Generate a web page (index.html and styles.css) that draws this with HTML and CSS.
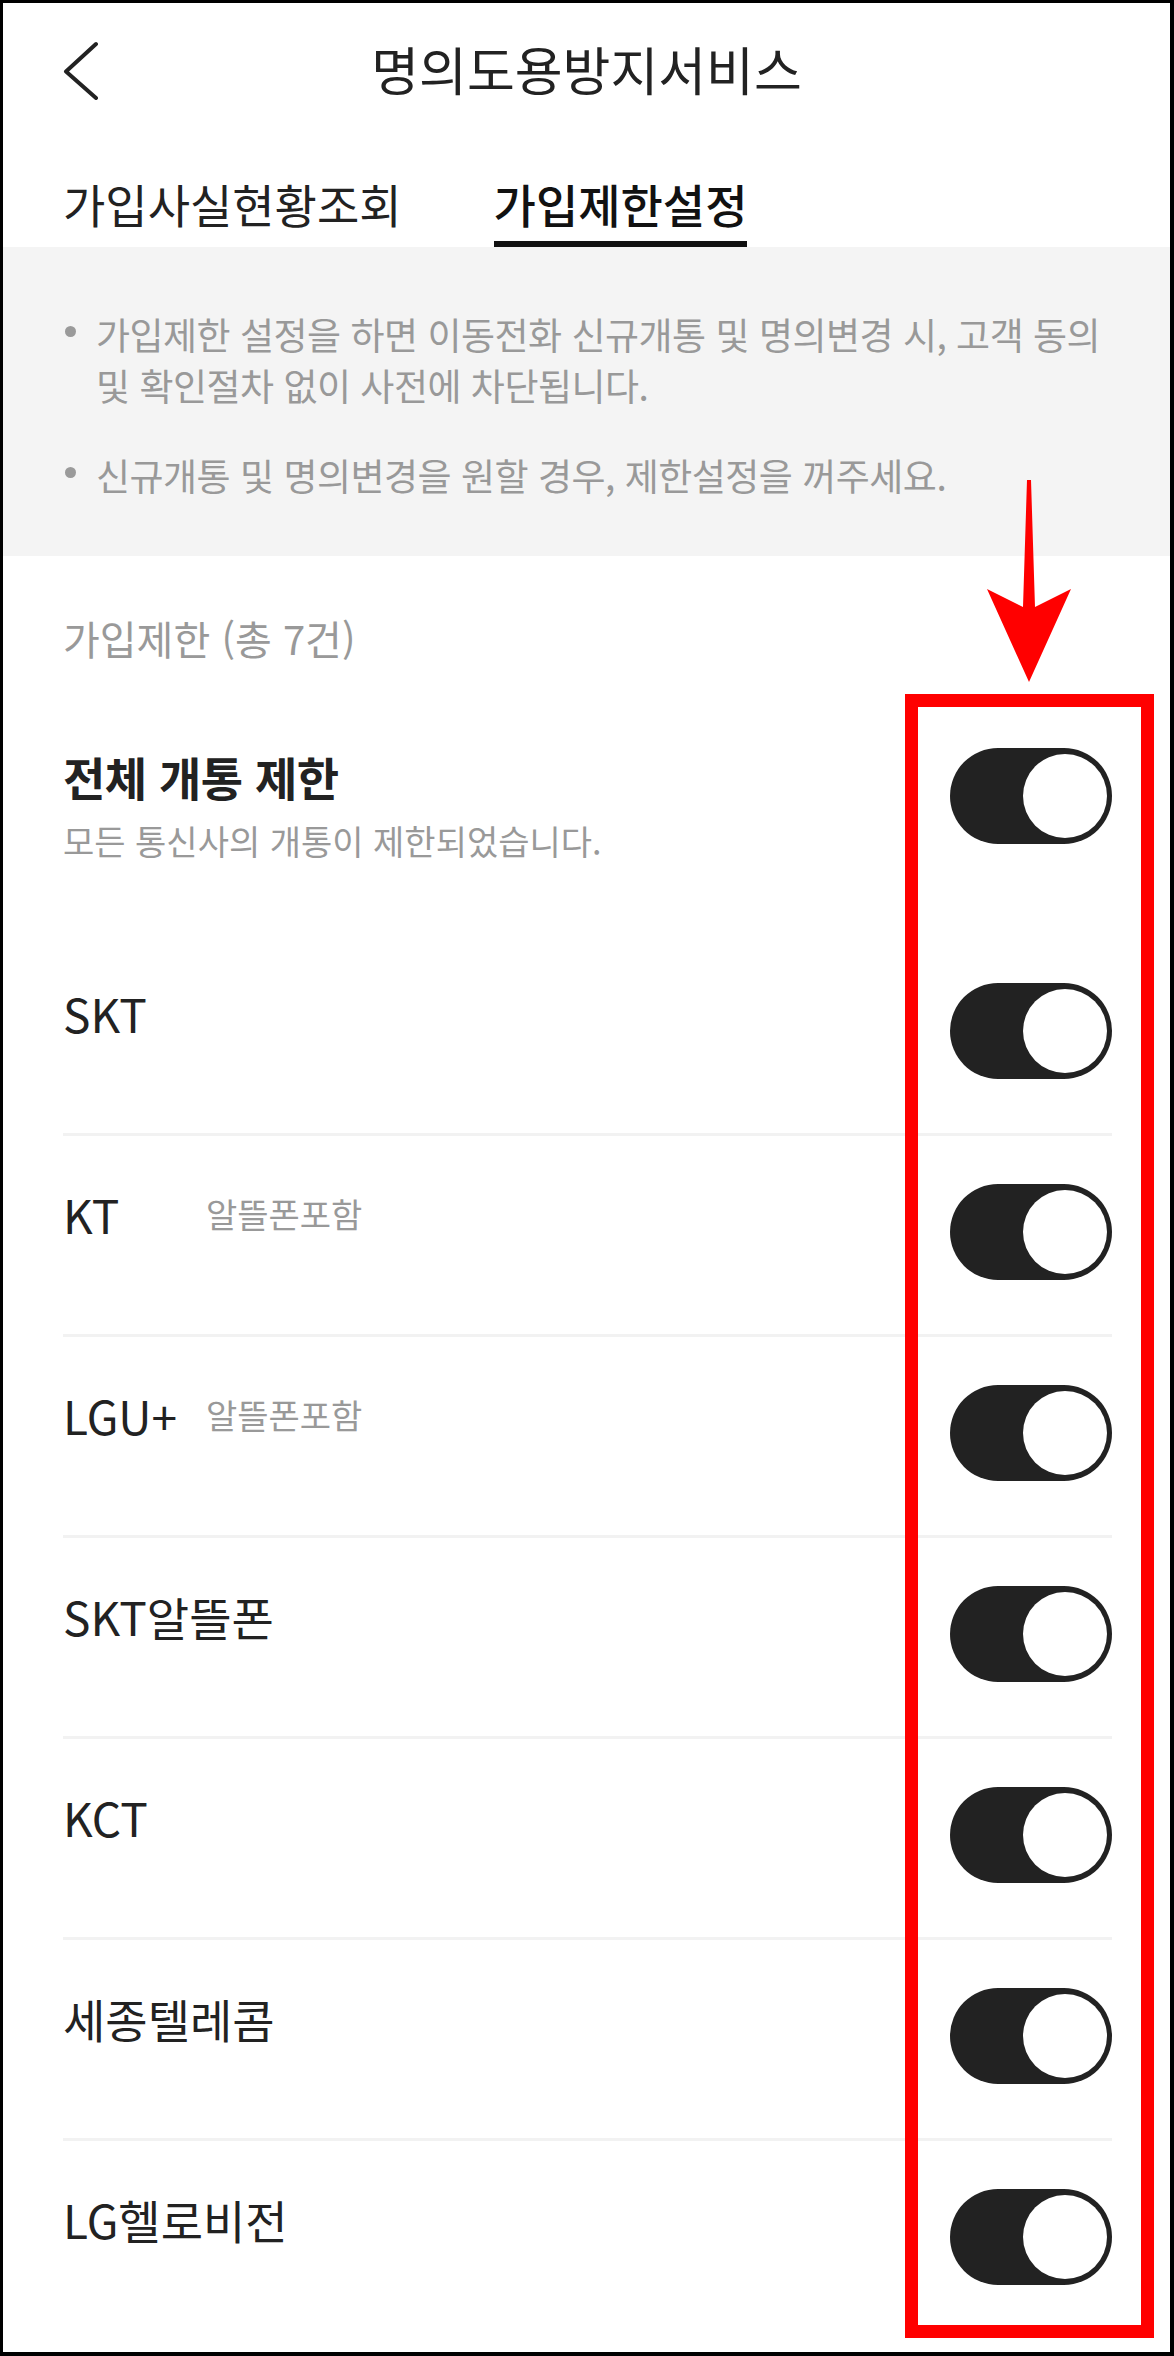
FILE: index.html
```html
<!DOCTYPE html>
<html lang="ko">
<head>
<meta charset="utf-8">
<title>명의도용방지서비스</title>
<link rel="stylesheet" href="styles.css">
</head>
<body>
<div class="screen">
  <header class="appbar">
    <button class="back" type="button" aria-label="뒤로">
      <svg class="back-icon" width="40" height="62" viewBox="0 0 40 62">
        <polyline points="33,6 3,33.5 33,60" fill="none" stroke="#222" stroke-width="4" stroke-linecap="round" stroke-linejoin="round"/>
      </svg>
    </button>
    <h1 class="title">명의도용방지서비스</h1>
    <span class="appbar-spacer"></span>
  </header>

  <nav class="tabs">
    <a class="tab" href="#">가입사실현황조회</a>
    <a class="tab tab--active" href="#">가입제한설정</a>
  </nav>

  <section class="notice">
    <ul class="notice-list">
      <li>가입제한 설정을 하면 이동전화 신규개통 및 명의변경 시, 고객 동의 및 확인절차 없이 사전에 차단됩니다.</li>
      <li>신규개통 및 명의변경을 원할 경우, 제한설정을 꺼주세요.</li>
    </ul>
  </section>

  <section class="list">
    <p class="list-head">가입제한 (총 7건)</p>

    <div class="row row--all">
      <div class="row-text">
        <p class="row-title">전체 개통 제한</p>
        <p class="row-desc">모든 통신사의 개통이 제한되었습니다.</p>
      </div>
      <span class="switch"><span class="knob"></span></span>
    </div>

    <div class="row">
      <div class="row-label"><span class="name">SKT</span></div>
      <span class="switch"><span class="knob"></span></span>
    </div>
    <div class="row">
      <div class="row-label"><span class="name">KT</span><span class="sub">알뜰폰포함</span></div>
      <span class="switch"><span class="knob"></span></span>
    </div>
    <div class="row">
      <div class="row-label"><span class="name">LGU+</span><span class="sub">알뜰폰포함</span></div>
      <span class="switch"><span class="knob"></span></span>
    </div>
    <div class="row">
      <div class="row-label"><span class="name">SKT알뜰폰</span></div>
      <span class="switch"><span class="knob"></span></span>
    </div>
    <div class="row">
      <div class="row-label"><span class="name">KCT</span></div>
      <span class="switch"><span class="knob"></span></span>
    </div>
    <div class="row">
      <div class="row-label"><span class="name">세종텔레콤</span></div>
      <span class="switch"><span class="knob"></span></span>
    </div>
    <div class="row">
      <div class="row-label"><span class="name">LG헬로비전</span></div>
      <span class="switch"><span class="knob"></span></span>
    </div>
  </section>

  <div class="annot-box"></div>
  <svg class="annot-arrow" width="100" height="215" viewBox="0 0 100 215">
    <polygon points="47,5 51,5 55,132 91,114 49,207 7,114 43,132" fill="#ff0000"/>
  </svg>
</div>
</body>
</html>
```

FILE: styles.css
```css
* {
  box-sizing: border-box;
}

html, body {
  margin: 0;
  padding: 0;
  background: #fff;
}

body {
  font-family: "Noto Sans CJK KR", "Noto Sans", sans-serif;
  color: #222;
}

.screen {
  position: relative;
  width: 1174px;
  height: 2356px;
  border-style: solid;
  border-color: #000;
  border-width: 3px 4px 4px 3px;
  background: #fff;
  overflow: hidden;
}

/* App bar */
.appbar {
  display: grid;
  grid-template-columns: 1fr auto 1fr;
  align-items: center;
  height: 132px;
  padding: 0 60px;
}

.back {
  justify-self: start;
  display: flex;
  padding: 0;
  margin: 0;
  border: 0;
  background: transparent;
}

.back-icon {
  display: block;
}

.title {
  margin: 0;
  font-size: 52px;
  font-weight: 400;
  line-height: 64px;
  color: #222;
}

/* Tabs */
.tabs {
  display: flex;
  align-items: flex-end;
  gap: 92px;
  height: 112px;
  padding-left: 60px;
}

.tab {
  font-size: 46px;
  line-height: 60px;
  padding-bottom: 8px;
  border-bottom: 6px solid transparent;
  color: #222;
  text-decoration: none;
}

.tab--active {
  border-bottom-color: #111;
  font-weight: 500;
  color: #111;
}

/* Notice */
.notice {
  background: #f4f4f4;
  padding: 62px 56px 55px 62px;
}

.notice-list {
  list-style: none;
  margin: 0;
  padding: 0;
}

.notice-list li {
  display: flex;
  gap: 20px;
  font-size: 37px;
  letter-spacing: -0.5px;
  line-height: 51px;
  color: #999;
}

.notice-list li + li {
  margin-top: 39px;
}

.notice-list li::before {
  content: "";
  flex: none;
  width: 11px;
  height: 11px;
  margin-top: 17px;
  border-radius: 50%;
  background: #9a9a9a;
}

/* List */
.list {
  margin: 0 58px 0 60px;
}

.list-head {
  margin: 0;
  padding: 56px 0 36px;
  font-size: 40px;
  line-height: 52px;
  color: #999;
}

.row {
  display: flex;
  justify-content: space-between;
  align-items: flex-start;
  padding: 48px 0 54px;
  border-bottom: 3px solid #f2f2f2;
}

.row:last-child {
  border-bottom: none;
}

.row--all {
  padding-bottom: 70px;
  border-bottom: none;
}

.row-title {
  margin: 0;
  font-size: 46px;
  font-weight: 700;
  letter-spacing: -0.5px;
  line-height: 56px;
  color: #222;
}

.row-desc {
  margin: 13px 0 0;
  font-size: 34px;
  line-height: 48px;
  color: #999;
}

.row-label {
  display: flex;
  align-items: center;
  line-height: 60px;
}

.name {
  min-width: 143px;
  font-size: 46px;
  color: #222;
}

.sub {
  font-size: 34px;
  color: #999;
}

/* Switch */
.switch {
  flex: none;
  display: flex;
  align-items: center;
  justify-content: flex-end;
  width: 162px;
  height: 96px;
  padding-right: 5px;
  border-radius: 48px;
  background: #222;
}

.knob {
  width: 84px;
  height: 84px;
  border-radius: 50%;
  background: #fff;
}

/* Red annotation overlay */
.annot-box {
  position: absolute;
  left: 902px;
  top: 691px;
  width: 249px;
  height: 1644px;
  border: 13px solid #ff0000;
}

.annot-arrow {
  position: absolute;
  left: 977px;
  top: 472px;
}
```
